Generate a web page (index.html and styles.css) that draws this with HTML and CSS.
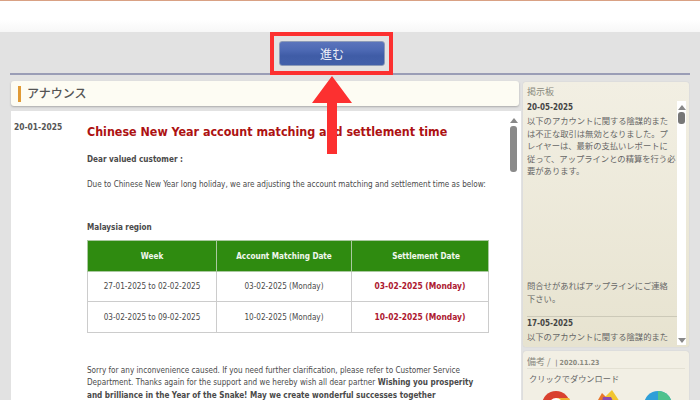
FILE: index.html
```html
<!DOCTYPE html>
<html lang="ja">
<head>
<meta charset="utf-8">
<title>アナウンス</title>
<link rel="stylesheet" href="styles.css">
</head>
<body>
<header class="topbar"></header>
<div class="toolbar"><button class="go">進む</button></div>
<div class="rule"></div>
<main class="columns">
  <section class="left">
    <div class="announce"><span class="mark"></span><h1>アナウンス</h1></div>
    <div class="content">
      <div class="date">20-01-2025</div>
      <article class="article">
        <h2>Chinese New Year account matching and settlement time</h2>
        <p class="b p1">Dear valued customer :</p>
        <p class="p2">Due to Chinese New Year long holiday, we are adjusting the account matching and settlement time as below:</p>
        <p class="b p3">Malaysia region</p>
        <table>
          <tr><th class="c1">Week</th><th class="c2">Account Matching Date</th><th class="c3">Settlement Date</th></tr>
          <tr><td>27-01-2025 to 02-02-2025</td><td>03-02-2025 (Monday)</td><td class="red">03-02-2025 (Monday)</td></tr>
          <tr><td>03-02-2025 to 09-02-2025</td><td>10-02-2025 (Monday)</td><td class="red">10-02-2025 (Monday)</td></tr>
        </table>
        <p class="p4">Sorry for any inconvenience caused. If you need further clarification, please refer to Customer Service Department. Thanks again for the support and we hereby wish all dear partner <b>Wishing you prosperity and brilliance in the Year of the Snake! May we create wonderful successes together</b></p>
      </article>
      <div class="scroll-main"><span class="up"></span><span class="thumb"></span></div>
    </div>
  </section>
  <aside class="right">
    <div class="board">
      <div class="panel-title">掲示板</div>
      <div class="board-body">
        <div class="notes">
          <div class="note">
            <div class="note-date">20-05-2025</div>
            <p>以下のアカウントに関する陰謀的また<br>は不正な取引は無効となりました。プ<br>レイヤーは、最新の支払いレポートに<br>従って、アップラインとの精算を行う必<br>要があります。</p>
            <p class="contact">問合せがあればアップラインにご連絡<br>下さい。</p>
          </div>
          <div class="note second">
            <div class="note-date">17-05-2025</div>
            <p>以下のアカウントに関する陰謀的また<br>は不正な取引は無効となりました。</p>
          </div>
        </div>
        <div class="scroll-side"><span class="up"></span><span class="thumb"></span><span class="down"></span></div>
      </div>
    </div>
    <div class="remarks">
      <div class="remarks-title"><span class="rt">備考 /</span> <span class="rv">| 2020.11.23</span></div>
      <div class="dl">クリックでダウンロード</div>
      <div class="browsers">
        <svg width="30" height="30" viewBox="0 0 30 30"><circle cx="15" cy="15" r="14" fill="#d9412f"/><path d="M15 8h13a14 14 0 0 1-13 21z" fill="#efb02f"/><path d="M15 15 3 22a14 14 0 0 0 12 7z" fill="#3f9d4f"/><circle cx="15" cy="15" r="7" fill="#fff"/><circle cx="15" cy="15" r="5" fill="#4a86e0"/></svg>
        <svg width="30" height="30" viewBox="0 0 30 30"><path d="M20 0 28 12 26 24H8L12 8z" fill="#f2c531"/><path d="M6 10 10 3 14 7 20 14 12 24H4z" fill="#e8772a"/><path d="M11 7h8l4 8-6 7-8-6z" fill="#8c4bb0"/></svg>
        <svg width="30" height="30" viewBox="0 0 30 30"><circle cx="15" cy="15" r="14" fill="#2f9fd8"/><path d="M15 1a14 14 0 0 1 14 14H15z" fill="#4fc28d"/><circle cx="15" cy="16" r="6" fill="#1f6fb8"/></svg>
      </div>
    </div>
  </aside>
</main>
<div class="callout"></div>
<svg class="arrow" width="40" height="78" viewBox="0 0 40 78"><path d="M20 0 40 27H25V78H15V27H0Z" fill="#fc3030"/></svg>
</body>
</html>
```

FILE: styles.css
```css
* { box-sizing: border-box; }
html, body { margin: 0; height: 400px; overflow: hidden; }
body {
  position: relative;
  background: #e2e2e2;
  font-family: "DejaVu Sans", sans-serif;
  font-stretch: condensed;
  color: #4a4a4a;
}
.topbar {
  height: 32px;
  border-top: 1px solid #d9a184;
  background: linear-gradient(#fff 60%, #f7f7f7);
}
.toolbar {
  height: 41px;
  display: flex;
  justify-content: center;
  align-items: flex-start;
  padding: 9px 36px 0 0;
}
.go {
  width: 106px;
  height: 25px;
  border: 1px solid #8d9bb8;
  border-radius: 3px;
  background: linear-gradient(#5b74bc 0, #4d69b4 35%, #3f5ca6 60%, #4360aa 100%);
  color: #eef0f8;
  font: 12px "Noto Sans CJK JP", sans-serif;
  padding: 0;
}
.rule {
  height: 2px;
  margin: 0 10px;
  background: #9a9db6;
}
.columns {
  display: flex;
  gap: 2px;
  padding: 5px 11px 0;
}
.left { width: 510px; padding-top: 1px; }
.announce {
  width: 508px;
  height: 25px;
  display: flex;
  align-items: center;
  gap: 6px;
  padding-left: 7px;
  background: #fdfcf3;
  border-radius: 3px;
  box-shadow: 0 1px 2px #aaa;
}
.mark { width: 3px; height: 16px; background: #e09a35; }
.announce h1 {
  margin: 0 0 2px;
  font: 500 12px/16px "Noto Sans CJK JP", sans-serif;
  color: #555;
}
.content {
  margin-top: 5px;
  height: 289px;
  background: #fff;
  display: flex;
  overflow: hidden;
  position: relative;
}
.date {
  width: 76px;
  flex: none;
  padding: 11px 0 0 3px;
  font: bold 8.4px "DejaVu Sans", sans-serif;
  font-stretch: condensed;
  color: #555;
}
.article {
  width: 402px;
  flex: none;
  font: 8.1px/12.5px "DejaVu Sans", sans-serif;
  font-stretch: condensed;
}
.article p { margin: 0; }
.article h2 {
  margin: 12px 0 0;
  font: bold 12.4px/17px "DejaVu Sans", sans-serif;
  font-stretch: condensed;
  color: #ad1212;
  white-space: nowrap;
}
.b { font-weight: bold; }
.p1 { padding-top: 13px; }
.p2 { padding-top: 12.5px; white-space: nowrap; }
.p3 { padding-top: 30px; }
table {
  margin-top: 7px;
  width: 402px;
  border-collapse: collapse;
  table-layout: fixed;
}
th, td {
  border: 1px solid #ccc;
  height: 30.6px;
  padding: 0;
  text-align: center;
  white-space: nowrap;
}
th { background: #2f8b10; color: #f2f7ee; border-color: #aac9a0; }
.c1 { width: 129px; }
.c2 { width: 135px; }
.c3 { padding-left: 12px; }
.red { color: #ad1830; font-weight: bold; font-size: 8.4px; }
.p4 { padding-top: 31px; }
.scroll-main {
  position: absolute;
  left: 499px;
  top: 0;
  width: 8px;
  height: 100%;
}
.up {
  display: block;
  width: 0;
  border: 4px solid transparent;
  border-top: 0;
  border-bottom: 5px solid #888;
}
.down {
  display: block;
  width: 0;
  border: 4px solid transparent;
  border-bottom: 0;
  border-top: 5px solid #888;
}
.scroll-main .up { margin-top: 7px; }
.scroll-main .thumb {
  display: block;
  width: 7px;
  height: 46px;
  margin-top: 3px;
  border-radius: 3px;
  background: #8a8a8a;
}
.right { width: 166px; padding-top: 2px; }
.board {
  height: 265px;
  background: linear-gradient(#f2efe3, #e7e3d0);
  border-radius: 3px;
  padding: 0 3px 2px 4px;
  box-shadow: 0 0 1px #bbb;
}
.panel-title {
  height: 19px;
  font: 9px/19px "Noto Sans CJK JP", sans-serif;
  color: #8b8b80;
}
.board-body {
  height: 244px;
  display: flex;
  overflow: hidden;
}
.notes { width: 150px; overflow: hidden; flex: none; }
.note-date {
  font: bold 8px/12px "DejaVu Sans", sans-serif;
  font-stretch: condensed;
  color: #444;
  padding-top: 1px;
}
.note p {
  margin: 0;
  font: 8.3px/12.6px "Noto Sans CJK JP", sans-serif;
  color: #666;
  white-space: nowrap;
}
.note p.contact { padding-top: 102px; padding-bottom: 12px; }
.second { border-top: 1px solid #ccc9b8; }
.scroll-side {
  width: 10px;
  background: #fff;
  padding: 3px 0 0 1px;
  position: relative;
}
.scroll-side .up { margin-top: 1px; }
.scroll-side .thumb {
  display: block;
  width: 7px;
  height: 12px;
  margin-top: 2px;
  border-radius: 3px;
  background: #777;
}
.scroll-side .down { position: absolute; left: 1px; bottom: 2px; }
.remarks {
  margin-top: 4px;
  height: 60px;
  background: #f2efe4;
  border-radius: 3px;
  padding: 0 4px;
  box-shadow: 0 0 1px #bbb;
}
.remarks-title {
  height: 18px;
  border-bottom: 1px solid #e4e1d4;
  line-height: 18px;
  overflow: hidden;
}
.rt { font: 9px/18px "Noto Sans CJK JP", sans-serif; color: #8a8a80; }
.rv { font: bold 7px/18px "DejaVu Sans", sans-serif; font-stretch: condensed; color: #8a8a80; }
.dl {
  padding: 3px 0 0 2px;
  font: 8.2px/12px "Noto Sans CJK JP", sans-serif;
  color: #666;
}
.browsers {
  display: flex;
  gap: 21px;
  padding: 6px 0 0 14px;
}
.callout {
  position: absolute;
  left: 270px;
  top: 32px;
  width: 123px;
  height: 43px;
  border: 4px solid #fc3030;
}
.arrow {
  position: absolute;
  left: 312px;
  top: 76px;
}
```
